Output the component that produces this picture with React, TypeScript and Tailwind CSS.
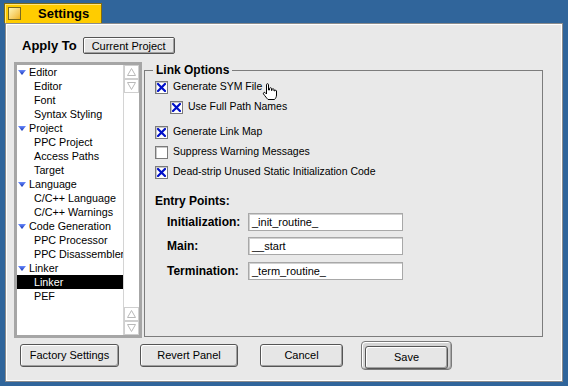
import { FC, ReactNode } from "react";

const tree = [
  { label: "Editor", items: ["Editor", "Font", "Syntax Styling"] },
  { label: "Project", items: ["PPC Project", "Access Paths", "Target"] },
  { label: "Language", items: ["C/C++ Language", "C/C++ Warnings"] },
  { label: "Code Generation", items: ["PPC Processor", "PPC Disassembler"] },
  { label: "Linker", items: ["Linker", "PEF"] },
];

const font = { fontFamily: '"Liberation Sans", Arial, sans-serif' };

const Triangle: FC = () => (
  <svg width="8" height="5" viewBox="0 0 8 5" className="shrink-0">
    <defs>
      <linearGradient id="tg" x1="0" y1="0" x2="0" y2="1">
        <stop offset="0" stopColor="#6b8cff" />
        <stop offset="1" stopColor="#1030b0" />
      </linearGradient>
    </defs>
    <polygon points="0,0 8,0 4,5" fill="url(#tg)" />
  </svg>
);

const Arrow: FC<{ up?: boolean }> = ({ up }) => (
  <div className="flex h-[14px] w-[15px] items-center justify-center border border-[#cfcfcf] bg-white">
    <svg width="9" height="8" viewBox="0 0 9 8">
      <polygon
        points={up ? "4.5,0.5 8.5,7.5 0.5,7.5" : "0.5,0.5 8.5,0.5 4.5,7.5"}
        fill="none"
        stroke="#b8b8b8"
      />
    </svg>
  </div>
);

const Check: FC<{ on?: boolean }> = ({ on }) => (
  <div className="flex h-[13px] w-[13px] shrink-0 items-center justify-center border border-[#7a7a7a] bg-white shadow-[inset_1px_1px_0_#c8c8c8]">
    {on && (
      <svg width="9" height="9" viewBox="0 0 9 9">
        <path d="M1 1 L8 8 M8 1 L1 8" stroke="#0010c8" strokeWidth="2.2" strokeLinecap="square" />
      </svg>
    )}
  </div>
);

const Hand: FC = () => (
  <svg width="17" height="18" viewBox="0 0 17 18" className="absolute left-[0px] top-[3px]">
    <path
      d="M4.5 1.5 C4.5 0.5 6.5 0.5 6.5 1.5 L6.5 7 L7.5 7 L7.5 5.5 C7.5 4.5 9.5 4.5 9.5 5.5 L9.5 7.5 L10 7.5 L10 6.5 C10 5.5 12 5.5 12 6.5 L12 8 L12.5 8 C12.5 7 14.5 7 14.5 8 L14.5 12 C14.5 14 13.5 15.5 12.5 16.5 L6 16.5 C5 15.5 3 13 1.5 11 C1 10 2 9 3 9.5 L4.5 11 Z"
      fill="#fff"
      stroke="#000"
      strokeWidth="1"
    />
  </svg>
);

const Btn: FC<{ children: ReactNode; className: string }> = ({ children, className }) => (
  <button
    className={
      "h-[23px] rounded-[3px] border border-[#555] bg-[#e6e6e6] text-[11px] text-black shadow-[inset_1px_1px_0_#fff,inset_-1px_-1px_0_#a0a0a0] " +
      className
    }
  >
    {children}
  </button>
);

const Field: FC<{ label: string; value: string }> = ({ label, value }) => (
  <div className="flex h-[18px] items-center">
    <span className="w-[81px] text-[12px] font-bold">{label}</span>
    <div className="flex h-[18px] w-[155px] items-center border border-[#a8a8a8] bg-white pl-[3px] text-[11px] shadow-[inset_1px_1px_0_#d0d0d0]">
      {value}
    </div>
  </div>
);

export default function App() {
  return (
    <div className="h-[386px] w-[568px] overflow-hidden bg-[#30659b] pl-[4px] pt-[3px] text-black" style={font}>
      {/* title tab */}
      <div className="flex h-[20px] w-[98px] items-center border border-b-0 border-[#806a10] bg-[#ffcc00] pl-[3px] shadow-[inset_1px_1px_0_#ffe680]">
        <div className="h-[13px] w-[13px] border border-[#7a6a20] bg-gradient-to-br from-[#fff6b0] to-[#f0b400]" />
        <span className="ml-[17px] text-[13px] font-bold leading-none">Settings</span>
      </div>

      {/* window */}
      <div className="ml-[1px] h-[359px] w-[558px] border border-[#8c8c8c] bg-[#e9e9e9] pl-[8px] pt-[13px] shadow-[inset_1px_1px_0_#fff,inset_-1px_-1px_0_#fff]">
        <div className="flex h-[17px] items-center">
          <span className="ml-[8px] text-[13px] font-bold">Apply To</span>
          <button className="ml-[6px] h-[17px] w-[92px] rounded-[2px] border border-[#555] bg-[#e4e4e4] text-[11px] shadow-[inset_1px_1px_0_#fff,inset_-1px_-1px_0_#a0a0a0]">
            Current Project
          </button>
        </div>

        <div className="mt-[10px] flex h-[273px] items-start">
          {/* list box */}
          <div className="-mt-[2px] flex h-[276px] w-[128px] border-[3px] border-[#a6a6a6] bg-white">
            <div className="w-[106px] overflow-hidden whitespace-nowrap text-[10.75px] leading-[14px]">
              {tree.map((g) => (
                <div key={g.label}>
                  <div className="flex h-[14px] items-center pl-[1px]">
                    <Triangle />
                    <span className="ml-[3px]">{g.label}</span>
                  </div>
                  {g.items.map((it) => {
                    const sel = g.label === "Linker" && it === "Linker";
                    return (
                      <div
                        key={it}
                        className={sel ? "h-[14px] bg-black pl-[17px] text-white" : "h-[14px] pl-[17px]"}
                      >
                        {it}
                      </div>
                    );
                  })}
                </div>
              ))}
            </div>
            <div className="flex w-[16px] flex-col justify-between border-l border-[#d4d4d4]">
              <div>
                <Arrow up />
                <Arrow />
              </div>
              <div>
                <Arrow up />
                <Arrow />
              </div>
            </div>
          </div>

          {/* link options */}
          <fieldset className="-mt-[2px] ml-[2px] h-[275px] w-[399px] border border-[#7c7c7c] pl-[10px]">
            <legend className="ml-[-2px] px-[3px] text-[12px] font-bold leading-[16px]">Link Options</legend>
            <div className="text-[10.5px]">
              <div className="mt-[2px] flex h-[14px] items-center">
                <Check on />
                <span className="ml-[5px]">Generate SYM File</span>
                <span className="relative h-[14px] w-[18px]">
                  <Hand />
                </span>
              </div>
              <div className="mt-[6px] flex h-[14px] items-center pl-[15px]">
                <Check on />
                <span className="ml-[5px]">Use Full Path Names</span>
              </div>
              <div className="mt-[11px] flex h-[14px] items-center">
                <Check on />
                <span className="ml-[5px]">Generate Link Map</span>
              </div>
              <div className="mt-[6px] flex h-[14px] items-center">
                <Check />
                <span className="ml-[5px]">Suppress Warning Messages</span>
              </div>
              <div className="mt-[6px] flex h-[14px] items-center">
                <Check on />
                <span className="ml-[5px]">Dead-strip Unused Static Initialization Code</span>
              </div>
            </div>
            <div className="mt-[14px] text-[12px] font-bold leading-[16px]">Entry Points:</div>
            <div className="mt-[4px] flex flex-col gap-[6px] pl-[12px]">
              <Field label="Initialization:" value="_init_routine_" />
              <Field label="Main:" value="__start" />
              <div className="mt-[1px]">
                <Field label="Termination:" value="_term_routine_" />
              </div>
            </div>
          </fieldset>
        </div>

        {/* bottom buttons */}
        <div className="mt-[4px] flex h-[29px] items-center pl-[6px]">
          <Btn className="w-[99px]">Factory Settings</Btn>
          <Btn className="ml-[21px] w-[98px]">Revert Panel</Btn>
          <Btn className="ml-[22px] w-[83px]">Cancel</Btn>
          <div className="ml-[18px] h-[29px] w-[91px] rounded-[4px] border border-[#7a7a7a] bg-[#d4d4d4] px-[3px] py-[2px] shadow-[inset_1px_1px_0_#fff,inset_-1px_-1px_0_#a8a8a8]">
            <Btn className="w-[83px]">Save</Btn>
          </div>
        </div>
      </div>
    </div>
  );
}
